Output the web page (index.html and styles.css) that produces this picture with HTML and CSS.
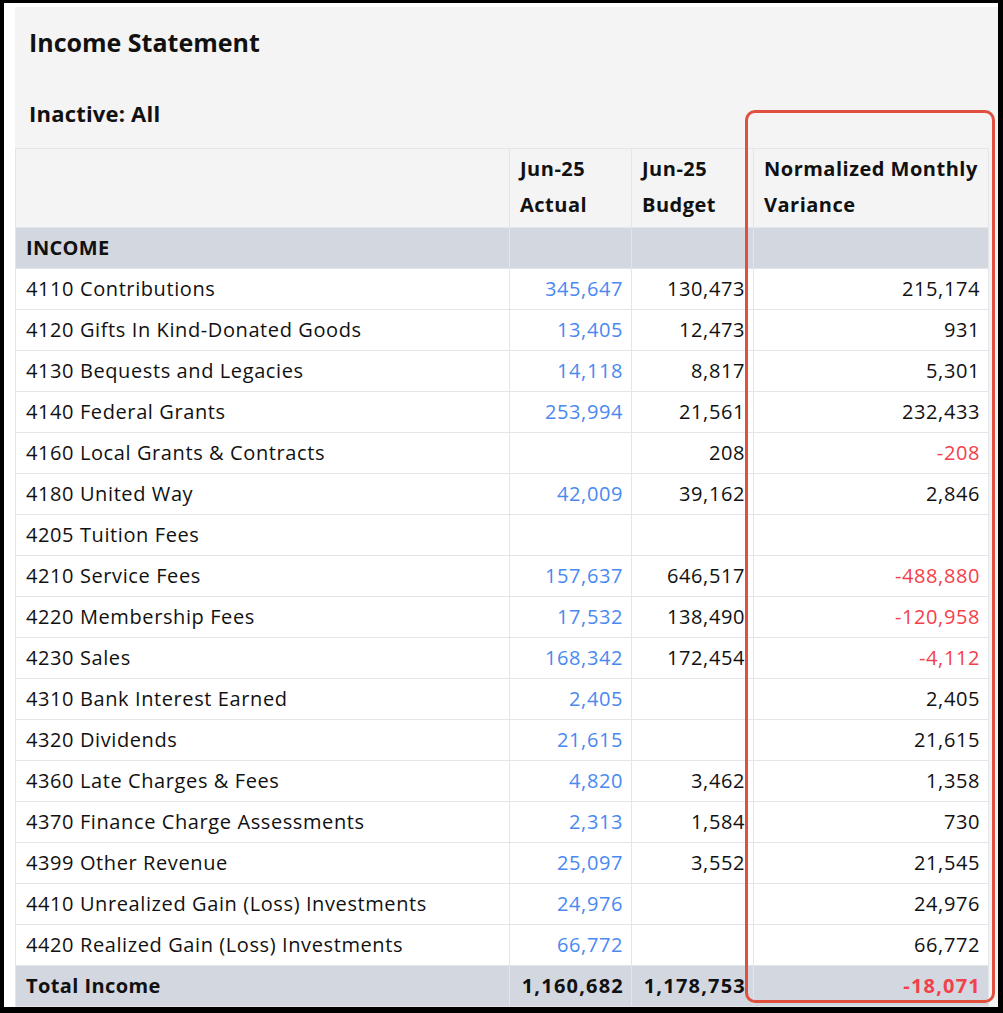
FILE: index.html
```html
<!DOCTYPE html>
<html>
<head>
<meta charset="utf-8">
<link rel="stylesheet" href="styles.css">
</head>
<body>
<div class="frame">
  <div class="panel">
    <h1 class="title">Income Statement</h1>
    <div class="filter">Inactive: All</div>
    <table class="report">
      <colgroup>
        <col class="c-name"><col class="c-num"><col class="c-num"><col class="c-var">
      </colgroup>
      <thead>
        <tr class="head">
          <th></th>
          <th>Jun-25<br>Actual</th>
          <th>Jun-25<br>Budget</th>
          <th>Normalized Monthly<br>Variance</th>
        </tr>
      </thead>
      <tbody>
        <tr class="section"><td>INCOME</td><td></td><td></td><td></td></tr>
        <tr><td>4110 Contributions</td><td class="num link">345,647</td><td class="num">130,473</td><td class="num">215,174</td></tr>
        <tr><td>4120 Gifts In Kind-Donated Goods</td><td class="num link">13,405</td><td class="num">12,473</td><td class="num">931</td></tr>
        <tr><td>4130 Bequests and Legacies</td><td class="num link">14,118</td><td class="num">8,817</td><td class="num">5,301</td></tr>
        <tr><td>4140 Federal Grants</td><td class="num link">253,994</td><td class="num">21,561</td><td class="num">232,433</td></tr>
        <tr><td>4160 Local Grants &amp; Contracts</td><td class="num link"></td><td class="num">208</td><td class="num neg">-208</td></tr>
        <tr><td>4180 United Way</td><td class="num link">42,009</td><td class="num">39,162</td><td class="num">2,846</td></tr>
        <tr><td>4205 Tuition Fees</td><td class="num"></td><td class="num"></td><td class="num"></td></tr>
        <tr><td>4210 Service Fees</td><td class="num link">157,637</td><td class="num">646,517</td><td class="num neg">-488,880</td></tr>
        <tr><td>4220 Membership Fees</td><td class="num link">17,532</td><td class="num">138,490</td><td class="num neg">-120,958</td></tr>
        <tr><td>4230 Sales</td><td class="num link">168,342</td><td class="num">172,454</td><td class="num neg">-4,112</td></tr>
        <tr><td>4310 Bank Interest Earned</td><td class="num link">2,405</td><td class="num"></td><td class="num">2,405</td></tr>
        <tr><td>4320 Dividends</td><td class="num link">21,615</td><td class="num"></td><td class="num">21,615</td></tr>
        <tr><td>4360 Late Charges &amp; Fees</td><td class="num link">4,820</td><td class="num">3,462</td><td class="num">1,358</td></tr>
        <tr><td>4370 Finance Charge Assessments</td><td class="num link">2,313</td><td class="num">1,584</td><td class="num">730</td></tr>
        <tr><td>4399 Other Revenue</td><td class="num link">25,097</td><td class="num">3,552</td><td class="num">21,545</td></tr>
        <tr><td>4410 Unrealized Gain (Loss) Investments</td><td class="num link">24,976</td><td class="num"></td><td class="num">24,976</td></tr>
        <tr><td>4420 Realized Gain (Loss) Investments</td><td class="num link">66,772</td><td class="num"></td><td class="num">66,772</td></tr>
        <tr class="total"><td>Total Income</td><td class="num">1,160,682</td><td class="num">1,178,753</td><td class="num neg">-18,071</td></tr>
      </tbody>
    </table>
    <div class="highlight"></div>
  </div>
</div>
</body>
</html>
```

FILE: styles.css
```css
* { box-sizing: border-box; }
html, body { margin: 0; padding: 0; background: #ffffff; }
body {
  font-family: "Open Sans", Lato, "Liberation Sans", sans-serif;
  color: #111111;
}
.frame {
  width: 1003px;
  height: 1013px;
  border-style: solid;
  border-color: #000000;
  border-width: 3px 5px 6px 4px;
  padding: 4px 0 0 11px;
  overflow: hidden;
}
.panel {
  position: relative;
  height: 100%;
  background: #f4f4f4;
  padding: 0 10px 0 0;
}
.title {
  margin: 0;
  padding: 19px 0 0 14px;
  height: 56px;
  font-size: 25px;
  font-weight: 700;
  line-height: 32px;
  letter-spacing: 0;
}
.filter {
  padding: 35px 0 0 14px;
  height: 85px;
  font-size: 22px;
  font-weight: 700;
  line-height: 30px;
  letter-spacing: 0.2px;
}
.report {
  width: 973px;
  border-collapse: collapse;
  table-layout: fixed;
  font-size: 20px;
  letter-spacing: 0.6px;
}
.c-name { width: 494px; }
.c-num { width: 122px; }
.c-var { width: 235px; }
.report th,
.report td {
  border: 1px solid #e2e5ea;
  padding: 0 8px 0 10px;
  white-space: nowrap;
}
.report th {
  text-align: left;
  font-weight: 700;
  font-size: 20px;
  line-height: 36px;
  height: 79px;
  padding-top: 0;
  padding-bottom: 2px;
  vertical-align: middle;
  letter-spacing: 0.5px;
}
.report td {
  height: 41px;
  line-height: 24px;
  vertical-align: middle;
  background: #ffffff;
}
.report td.num { text-align: right; }
.report td.link { color: #4a88f2; }
.report td.neg { color: #f2414a; }
.report tr.section td {
  background: #d3d7df;
  font-weight: 700;
  letter-spacing: 0.3px;
}
.report tr.total td {
  background: #d3d7df;
  font-weight: 700;
  height: 41px;
  letter-spacing: 0.4px;
}
.report tr.total td.num {
  letter-spacing: 1.2px;
  padding-right: 7px;
}
.highlight {
  position: absolute;
  left: 730px;
  top: 103px;
  width: 250px;
  height: 893px;
  border: 3px solid #e1503e;
  border-radius: 10px;
  pointer-events: none;
}
```
